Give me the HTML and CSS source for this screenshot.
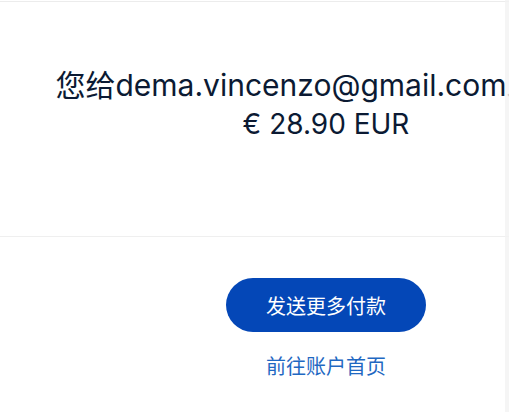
FILE: index.html
```html
<!DOCTYPE html>
<html lang="zh-CN">
<head>
<meta charset="utf-8">
<title>付款已发送</title>
<link rel="stylesheet" href="styles.css">
</head>
<body>
<div class="viewport">
  <div class="page">
    <div class="top-rule"></div>
    <section class="summary">
      <p class="summary-line summary-lead">您给dema.vincenzo@gmail.com发送了</p>
      <p class="summary-line">€ 28.90 EUR</p>
    </section>
    <div class="divider"></div>
    <section class="actions">
      <a class="btn-primary" href="#">发送更多付款</a>
      <a class="link" href="#">前往账户首页</a>
    </section>
  </div>
  <div class="edge"></div>
</div>
</body>
</html>
```

FILE: styles.css
```css
html, body {
  margin: 0;
  padding: 0;
  background: #ffffff;
}
body {
  width: 509px;
  height: 412px;
  overflow: hidden;
  font-family: Inter, "Noto Sans CJK SC", sans-serif;
  color: #0b1a33;
}
.viewport {
  position: relative;
  width: 509px;
  height: 412px;
  overflow: hidden;
}
.page {
  width: 652px;
}
.top-rule {
  height: 1px;
  margin-top: 1px;
  background: #ececec;
}
.summary {
  padding: 63px 0 92px;
  text-align: center;
}
.summary-line {
  margin: 0;
  font-size: 28px;
  line-height: 39px;
  white-space: nowrap;
  font-family: Inter, "Noto Sans CJK SC", sans-serif;
}
.summary-lead {
  font-size: 30px;
  line-height: 40px;
}
.divider {
  height: 1px;
  background: #efefef;
}
.actions {
  display: flex;
  flex-direction: column;
  align-items: center;
  padding-top: 41px;
  gap: 20px;
}
.btn-primary {
  display: flex;
  align-items: center;
  justify-content: center;
  height: 54px;
  padding: 0 40px;
  border-radius: 27px;
  background: #0447b7;
  color: #ffffff;
  font-family: "Noto Sans CJK SC", sans-serif;
  font-size: 20px;
  text-decoration: none;
}
.link {
  font-family: "Noto Sans CJK SC", sans-serif;
  font-size: 20px;
  line-height: 28px;
  color: #1f68c2;
  text-decoration: none;
}
.edge {
  position: absolute;
  top: 0;
  right: 0;
  width: 4px;
  height: 100%;
  background: rgba(242, 242, 242, 0.8);
}
```
